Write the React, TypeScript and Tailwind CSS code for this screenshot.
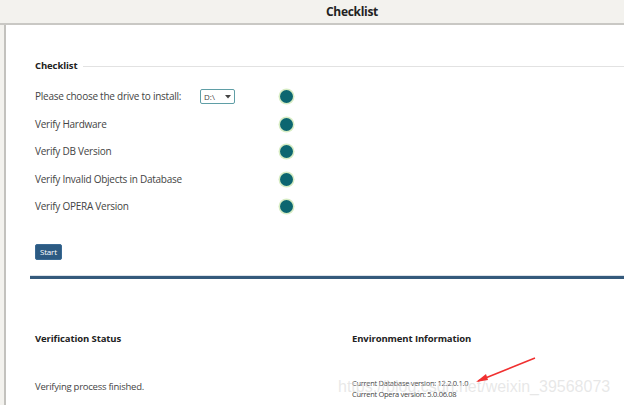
import React from 'react';

const rows = [
  'Please choose the drive to install:',
  'Verify Hardware',
  'Verify DB Version',
  'Verify Invalid Objects in Database',
  'Verify OPERA Version',
];

const StatusDot: React.FC = () => (
  <span className="block h-[13px] w-[13px] rounded-full bg-[#0c6670] shadow-[0_0_0_1.5px_#d7ecc4]" />
);

const App: React.FC = () => {
  return (
    <div className="relative h-[405px] w-[624px] overflow-hidden bg-[#f3f2ee] font-['Open_Sans',sans-serif] text-[#333]">
      <div className="flex h-[25px] items-center justify-center border-b-2 border-[#c9c8c4] pl-[80px] text-[12px] font-bold tracking-[-0.3px] text-[#222]">
        Checklist
      </div>
      <div className="ml-[4px] h-[380px] border-l-2 border-[#c3c2be] bg-white pl-[29px] pr-0">
        {/* checklist section */}
        <div className="flex items-center pt-[34px]">
          <span className="text-[9.5px] font-bold tracking-[-0.1px] text-[#222]">Checklist</span>
          <span className="ml-[6px] h-px flex-1 bg-[#e2e2e2]" />
        </div>
        <div className="mt-[10px] flex flex-col">
          {rows.map((label, i) => (
            <div key={label} className="flex h-[27.4px] items-center">
              <span className="w-[165px] text-[10px] tracking-[-0.25px] text-[#444]">{label}</span>
              <span className="w-[80px]">
                {i === 0 && (
                  <span className="flex h-[15px] w-[35px] items-center justify-between rounded-[2px] border border-[#5f9ea6] px-[3px] text-[8px] text-[#444]">
                    D:\
                    <svg width="6" height="4" viewBox="0 0 6 4">
                      <path d="M0 0h6L3 3.5z" fill="#444" />
                    </svg>
                  </span>
                )}
              </span>
              <StatusDot />
            </div>
          ))}
        </div>
        <div className="mt-[17px]">
          <button className="h-[16px] rounded-[2px] border border-[#3a6a94] bg-[#2c5a82] px-[4px] text-[8px] leading-none tracking-[-0.2px] text-white">
            Start
          </button>
        </div>
        <div className="-ml-[5px] mt-[14px] border-t border-[#dde3ea]">
          <div className="h-[3px] bg-[#355a7c]" />
        </div>
        {/* lower section */}
        <div className="mt-[53px] flex">
          <div className="w-[317px]">
            <div className="text-[9.5px] font-bold tracking-[-0.1px] text-[#222]">Verification Status</div>
            <div className="mt-[34px] text-[9.5px] tracking-[-0.25px] text-[#444]">Verifying process finished.</div>
          </div>
          <div className="flex-1">
            <div className="text-[9.5px] font-bold tracking-[-0.1px] text-[#222]">Environment Information</div>
            <div className="mt-[32px] text-[7.5px] leading-[11px] tracking-[-0.3px] text-[#444]">
              <div>Current Database version: 12.2.0.1.0</div>
              <div>Current Opera version: 5.0.06.08</div>
            </div>
          </div>
        </div>
      </div>
      {/* watermark + annotation arrow overlay */}
      <div className="pointer-events-none absolute left-[338px] top-[375px] whitespace-nowrap font-['Liberation_Sans',sans-serif] text-[16px] text-[#d8d8d8]/60">
        https://blog.csdn.net/weixin_39568073
      </div>
      <svg className="pointer-events-none absolute left-0 top-0" width="624" height="405">
        <path d="M535 358 L478 381" stroke="#f03030" strokeWidth="1.5" />
        <path d="M476 382 L486 374 L488 380 Z" fill="#f03030" />
      </svg>
    </div>
  );
};

export default App;
